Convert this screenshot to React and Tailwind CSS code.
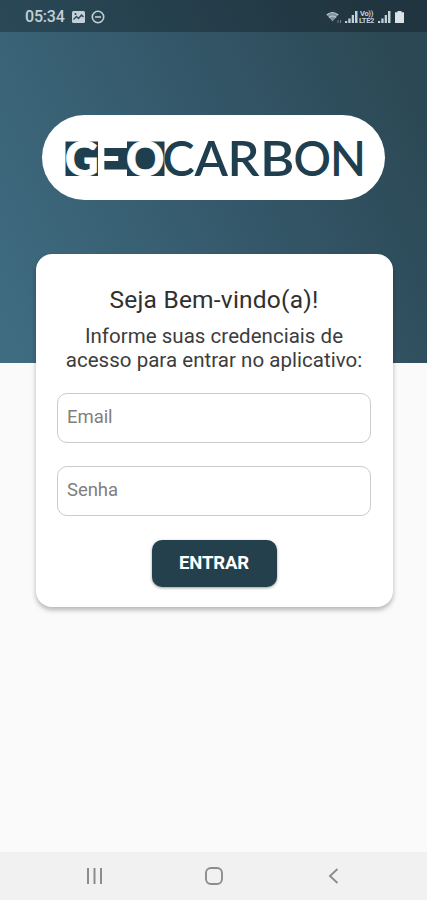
const NAVY = '#203f4e';

// Letters of the wordmark, each one fitted to its own slot
const darkLetters = [
  { char: 'C', x: 162.5, width: 32 },
  { char: 'A', x: 194.5, width: 33.5 },
  { char: 'R', x: 227.5, width: 32 },
  { char: 'B', x: 260, width: 34.5 },
  { char: 'O', x: 293.5, width: 37.5 },
  { char: 'N', x: 330, width: 36 },
];

const LightLetter = ({ char, x, width, weight, stroke }) => (
  <text
    x={x}
    y="175.7"
    textLength={width}
    lengthAdjust="spacingAndGlyphs"
    fill="#fff"
    stroke="#fff"
    strokeWidth={stroke}
    fontWeight={weight}
  >
    {char}
  </text>
);

const Logo = () => (
  <svg
    className="h-full w-full"
    viewBox="42 115 343 85"
    fontFamily="Lato, sans-serif"
    fontSize="47.5"
  >
    {/* the E goes first so the G and O tiles close in on it */}
    <rect x="104" y="148" width="26" height="21.5" fill={NAVY} />
    <LightLetter char="E" x={92.5} width={31.5} weight={700} stroke={0} />
    <rect x="65.5" y="141.5" width="32.5" height="34.5" fill={NAVY} />
    <rect x="127" y="141.5" width="37.5" height="34.5" fill={NAVY} />
    <LightLetter char="G" x={65} width={33.5} weight={900} stroke={0.8} />
    <LightLetter char="O" x={126} width={38.5} weight={900} stroke={0.8} />
    {darkLetters.map((l) => (
      <text key={l.x} x={l.x} y="175.5" textLength={l.width} lengthAdjust="spacingAndGlyphs" fill={NAVY} fontWeight="600">
        {l.char}
      </text>
    ))}
  </svg>
);

const SignalIcon = () => (
  <svg className="h-[14px] w-[13px]" viewBox="0 0 13 14" fill="currentColor">
    <rect x="0" y="11" width="2.2" height="2" />
    <rect x="3.3" y="8.5" width="2.3" height="4.5" />
    <rect x="6.7" y="5" width="2.3" height="8" />
    <rect x="10" y="1" width="2.5" height="12" />
  </svg>
);

const StatusBar = () => (
  <div className="flex h-8 items-center justify-between bg-black/26 pl-[25px] pr-[23px] text-[#c3d0d7]">
    <div className="flex items-center pt-[2px]">
      <span className="w-[47px] text-[16px] font-medium leading-none tracking-[-0.2px]">05:34</span>
      <svg className="h-3 w-[13px]" viewBox="0 0 13 12">
        <rect width="13" height="12" rx="1.5" fill="currentColor" />
        <path d="M1.5 8.5 4.5 5.5 6.5 7.5 9.5 4 11.5 6" fill="none" stroke="#2b4654" strokeWidth="1.3" />
        <circle cx="3.5" cy="3" r="1" fill="#2b4654" />
      </svg>
      <svg className="ml-[6px] h-[14px] w-[14px]" viewBox="0 0 14 14" fill="none" stroke="currentColor" strokeWidth="1.6">
        <circle cx="7" cy="7" r="5.7" />
        <path d="M4 7h6" />
      </svg>
    </div>
    <div className="flex items-center pt-[2px]">
      <svg className="h-[13px] w-[16px]" viewBox="0 0 16 13">
        <path d="M1 4Q6.5-1 12 4L6.5 10.5Z" fill="currentColor" opacity=".6" />
        <path d="M.7 4Q6.5-1 12.3 4M3 6.5Q6.5 3.5 10 6.5" fill="none" stroke="currentColor" strokeWidth="1.2" />
        <path d="M12 9v3M14.5 9v3" stroke="currentColor" opacity=".5" />
      </svg>
      <span className="ml-[3px]"><SignalIcon /></span>
      <span className="flex w-[17px] flex-col items-center text-[7.5px] font-bold leading-[7px] tracking-[-0.3px]">
        <span>Vo))</span>
        <span>LTE2</span>
      </span>
      <span className="ml-[3px]"><SignalIcon /></span>
      <svg className="ml-[4px] h-[12px] w-[9px]" viewBox="0 0 9 12" fill="#dce3e6">
        <path d="M2.5 0h4v1.2H9V12H0V1.2h2.5Z" />
      </svg>
    </div>
  </div>
);

const Field = ({ label, type }) => (
  <input
    type={type}
    placeholder={label}
    aria-label={label}
    className="h-[50px] w-full rounded-[10px] border-[1.5px] border-[#cbcbcb] bg-white px-[9px] pb-[3px] text-[18.5px] tracking-[-0.05px] text-[#333] outline-none placeholder:text-[#808080]"
  />
);

const LoginCard = () => (
  <form className="-mt-[109px] ml-[36px] flex h-[353px] w-[357px] flex-col items-center rounded-[16px] bg-white pl-[21px] pr-[22px] pt-[31px] shadow-[0_3px_5px_rgba(0,0,0,0.28)]">
    <h1 className="whitespace-nowrap text-[24.5px] leading-[30px] tracking-[0.22px] text-[#303030]">Seja Bem-vindo(a)!</h1>
    <p className="mt-[9px] whitespace-nowrap text-center text-[20.5px] leading-6 tracking-[0.03px] text-[#3c3c3c]">
      Informe suas credenciais de
      <br />
      acesso para entrar no aplicativo:
    </p>
    <div className="mt-[21px] flex w-full flex-col gap-[23.4px]">
      <Field label="Email" type="email" />
      <Field label="Senha" type="password" />
    </div>
    <button
      type="button"
      className="mt-[23.6px] h-[47px] w-[125px] rounded-[10px] bg-[#24404d] text-[18.5px] font-bold tracking-[-0.1px] text-white shadow-[0_1px_3px_rgba(0,0,0,0.4)]"
    >
      ENTRAR
    </button>
  </form>
);

const NavBar = () => (
  <div className="mt-auto flex h-12 items-center bg-[#f1f1f1] pl-[86px] text-[#8c8c8c]">
    <svg className="h-4 w-[17px]" viewBox="0 0 17 16" stroke="currentColor" strokeWidth="2">
      <path d="M2 0v16M8.5 0v16M15 0v16" />
    </svg>
    <svg className="ml-[102px] h-[18px] w-[18px]" viewBox="0 0 18 18" fill="none" stroke="currentColor" strokeWidth="1.9">
      <rect x="1" y="1" width="16" height="16" rx="5" />
    </svg>
    <svg className="ml-[105px] h-4 w-[11px]" viewBox="0 0 11 16" fill="none" stroke="currentColor" strokeWidth="1.9">
      <path d="M9.5 1 2 8 9.5 15" />
    </svg>
  </div>
);

const App = () => (
  <div className="flex h-[900px] w-full flex-col overflow-hidden bg-[#fafafa] font-[Roboto,sans-serif]">
    <header className="h-[363px] shrink-0 bg-[linear-gradient(65deg,#406d82_0%,#34586a_52%,#2c4855_90%)]">
      <StatusBar />
      <div className="mx-auto mt-[83px] h-[85px] w-[343px] rounded-full bg-white">
        <Logo />
      </div>
    </header>
    <LoginCard />
    <NavBar />
  </div>
);

export default App;
